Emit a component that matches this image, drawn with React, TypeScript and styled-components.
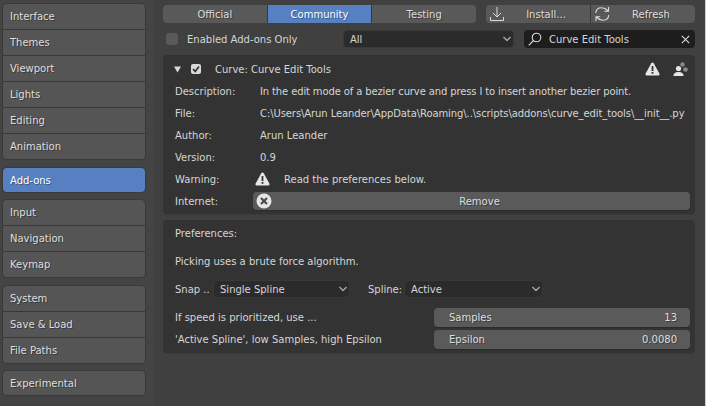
import { FC, ReactNode } from 'react';
import styled, { createGlobalStyle } from 'styled-components';

const GlobalStyle = createGlobalStyle`
  html, body {
    margin: 0;
    padding: 0;
    background: #404040;
  }
  * {
    box-sizing: border-box;
  }
`;

const Page = styled.div`
  width: 706px;
  height: 406px;
  display: flex;
  overflow: hidden;
  background: #404040;
  border-right: 1px solid #d9c9d1;
  color: #d6d6d6;
  font-family: 'DejaVu Sans', sans-serif;
  font-size: 10px;
  line-height: 13px;
  white-space: nowrap;
`;

const Sidebar = styled.aside`
  width: 154px;
  flex: none;
  padding: 4px 9px 0 3px;
  display: flex;
  flex-direction: column;
  background: #444444;
`;

const NavGroup = styled.nav<{ $tight?: boolean }>`
  display: flex;
  flex-direction: column;
  gap: 1px;
  margin-bottom: ${(p) => (p.$tight ? 8 : 9)}px;
  border-radius: 4px;
  overflow: hidden;
  background: #383838;
  box-shadow: 0 0 0 1px #3a3a3a;
`;

const NavItem = styled.div<{ $active?: boolean; $single?: boolean }>`
  height: ${(p) => (p.$single ? 24 : 25)}px;
  padding-left: 7px;
  display: flex;
  align-items: center;
  background: ${(p) => (p.$active ? '#5680c2' : '#555555')};
  color: ${(p) => (p.$active ? '#ffffff' : '#dedede')};
  text-shadow: 1px 1px 0 rgba(0, 0, 0, 0.35);
`;

const Main = styled.main`
  flex: 1;
  min-width: 0;
  padding: 5px 10px 0 9px;
  display: flex;
  flex-direction: column;
`;

const TopRow = styled.div`
  display: flex;
  justify-content: space-between;
  height: 18px;
`;

const ButtonGroup = styled.div<{ $width: number }>`
  width: ${(p) => p.$width}px;
  display: flex;
  gap: 1px;
  border-radius: 4px;
  overflow: hidden;
  background: #383838;
`;

const TabButton = styled.div<{ $active?: boolean; $withIcon?: boolean }>`
  flex: 1;
  position: relative;
  padding-left: ${(p) => (p.$withIcon ? 16 : 0)}px;
  display: flex;
  align-items: center;
  justify-content: center;
  background: ${(p) => (p.$active ? '#5680c2' : '#595959')};
  color: ${(p) => (p.$active ? '#ffffff' : '#dedede')};
  text-shadow: 1px 1px 0 rgba(0, 0, 0, 0.35);
`;

const TabIcon = styled.svg`
  position: absolute;
  left: 4px;
  top: 1px;
`;

const FilterRow = styled.div`
  display: flex;
  align-items: center;
  height: 18px;
  margin-top: 7px;
`;

const Checkbox = styled.div`
  width: 12px;
  height: 12px;
  margin-left: 3px;
  border-radius: 3px;
  background: #5a5a5a;
`;

const FilterLabel = styled.span`
  margin-left: 9px;
  width: 156px;
`;

const Select = styled.div<{ $width: number }>`
  width: ${(p) => p.$width}px;
  height: 18px;
  padding: 0 1px 0 6px;
  display: flex;
  align-items: center;
  justify-content: space-between;
  border-radius: 4px;
  background: #2b2b2b;
  border: 1px solid #383838;
`;

const SearchBox = styled.div`
  width: 171px;
  height: 18px;
  margin-left: 10px;
  padding: 0 5px 0 4px;
  display: flex;
  align-items: center;
  border-radius: 4px;
  background: #1d1d1d;
`;

const SearchText = styled.span`
  flex: 1;
  margin-left: 7px;
`;

const Panel = styled.section`
  border-radius: 4px;
  background: #333333;
  box-shadow: 0 1px 0 #3a3a3a;
`;

const AddonPanel = styled(Panel)`
  margin-top: 7px;
  height: 159px;
  padding: 3px 5px 0 12px;
`;

const PrefsPanel = styled(Panel)`
  margin-top: 6px;
  height: 133px;
  padding: 7px 5px 0 12px;
`;

const Header = styled.div`
  height: 22px;
  display: flex;
  align-items: center;
`;

const DisclosureIcon = styled.svg`
  margin-left: -1px;
`;

const HeaderIcons = styled.div`
  margin-left: auto;
  padding-right: 2px;
  display: flex;
  align-items: center;
  gap: 13px;
`;

const SmallCheck = styled.div`
  width: 10px;
  height: 10px;
  margin-left: 10px;
  border-radius: 2px;
  background: #d9d9d9;
  display: flex;
  align-items: center;
  justify-content: center;
`;

const HeaderTitle = styled.span`
  margin-left: 14px;
`;

const InfoRow = styled.div`
  display: grid;
  grid-template-columns: 85px 1fr;
  align-items: center;
  height: 22px;
`;

const LongValue = styled.span<{ $tracking: number }>`
  letter-spacing: ${(p) => p.$tracking}px;
`;

const WarningValue = styled.div`
  margin-left: -5px;
  display: flex;
  align-items: center;
  gap: 14px;
`;

const RemoveButton = styled.div`
  position: relative;
  margin-left: -7px;
  height: 18px;
  padding-left: 16px;
  display: flex;
  align-items: center;
  justify-content: center;
  border-radius: 4px;
  background: #5a5a5a;
  color: #dedede;
  text-shadow: 1px 1px 0 rgba(0, 0, 0, 0.35);
  box-shadow: 0 1px 0 #2a2a2a;
`;

const RemoveIcon = styled.svg`
  position: absolute;
  left: 3px;
  top: 1px;
`;

const PrefLine = styled.div<{ $gap: number }>`
  margin-top: ${(p) => p.$gap}px;
  height: 13px;
`;

const SnapRow = styled.div`
  margin-top: 11px;
  height: 20px;
  display: flex;
  align-items: center;
`;

const SnapLabel = styled.span`
  width: 38px;
`;

const SplineLabel = styled.span`
  margin-left: 18px;
  width: 36px;
`;

const SettingsBlock = styled.div`
  margin-top: 7px;
`;

const SettingRow = styled.div`
  display: grid;
  grid-template-columns: 259px 1fr;
  align-items: center;
  height: 22px;
`;

const NumberField = styled.div`
  height: 19px;
  margin-top: 1px;
  padding: 0 13px 0 15px;
  display: flex;
  align-items: center;
  justify-content: space-between;
  border-radius: 4px;
  background: #5a5a5a;
  color: #dedede;
  text-shadow: 1px 1px 0 rgba(0, 0, 0, 0.35);
  box-shadow: 0 1px 0 #2a2a2a;
`;

const Chevron: FC = () => (
  <svg width="10" height="8" viewBox="0 0 10 8" fill="none">
    <path d="M1.5 2 L5 5.5 L8.5 2" stroke="#a8a8a8" strokeWidth="1.4" />
  </svg>
);

const WarningIcon: FC = () => (
  <svg width="15" height="14" viewBox="0 0 15 14">
    <path
      d="M7.5 0.5 C8 0.5 8.4 0.8 8.7 1.3 L14.4 11.6 C14.9 12.6 14.4 13.5 13.3 13.5 L1.7 13.5 C0.6 13.5 0.1 12.6 0.6 11.6 L6.3 1.3 C6.6 0.8 7 0.5 7.5 0.5 Z"
      fill="#e6e6e6"
    />
    <rect x="6.6" y="4" width="1.8" height="5" fill="#333333" />
    <rect x="6.6" y="10" width="1.8" height="1.8" fill="#333333" />
  </svg>
);

interface IRowProps {
  label: string;
  children: ReactNode;
}

const Row: FC<IRowProps> = ({ label, children }) => (
  <InfoRow>
    <span>{label}</span>
    {children}
  </InfoRow>
);

const App: FC = () => (
  <Page>
    <GlobalStyle />
    <Sidebar>
      <NavGroup>
        {['Interface', 'Themes', 'Viewport', 'Lights', 'Editing', 'Animation'].map((n) => (
          <NavItem key={n}>{n}</NavItem>
        ))}
      </NavGroup>
      <NavGroup $tight>
        <NavItem $active $single>
          Add-ons
        </NavItem>
      </NavGroup>
      <NavGroup>
        {['Input', 'Navigation', 'Keymap'].map((n) => (
          <NavItem key={n}>{n}</NavItem>
        ))}
      </NavGroup>
      <NavGroup $tight>
        {['System', 'Save & Load', 'File Paths'].map((n) => (
          <NavItem key={n}>{n}</NavItem>
        ))}
      </NavGroup>
      <NavGroup $tight>
        <NavItem $single>Experimental</NavItem>
      </NavGroup>
    </Sidebar>
    <Main>
      <TopRow>
        <ButtonGroup $width={313}>
          <TabButton>Official</TabButton>
          <TabButton $active>Community</TabButton>
          <TabButton>Testing</TabButton>
        </ButtonGroup>
        <ButtonGroup $width={209}>
          <TabButton $withIcon>
            <TabIcon width="15" height="16" viewBox="0 0 15 16" fill="none" stroke="#dcdcdc" strokeWidth="1">
              <path d="M7 1 V11 M3 7 L7 11 L11 7 M0.5 11 V14.5 H13.5 V11" />
            </TabIcon>
            Install...
          </TabButton>
          <TabButton $withIcon>
            <TabIcon width="15" height="16" viewBox="0 0 15 16" fill="none" stroke="#dcdcdc" strokeWidth="1.1">
              <path d="M0.8 7 C1 3.5 3.5 1.8 6.5 1.8 C9 1.8 11 2.8 13.2 5 M13.5 1 V5.3 H9.3" />
              <path d="M13.7 9 C13.5 12.5 11 14.2 8 14.2 C5.5 14.2 3.5 13.2 1.3 11 M1 15 V10.7 H5.2" />
            </TabIcon>
            Refresh
          </TabButton>
        </ButtonGroup>
      </TopRow>
      <FilterRow>
        <Checkbox />
        <FilterLabel>Enabled Add-ons Only</FilterLabel>
        <Select $width={171}>
          All
          <Chevron />
        </Select>
        <SearchBox>
          <svg width="14" height="14" viewBox="0 0 14 14" fill="none" stroke="#d9d9d9" strokeWidth="1.1">
            <circle cx="8.5" cy="5.5" r="4.3" />
            <path d="M5.5 8.5 L0.7 13.3" />
          </svg>
          <SearchText>Curve Edit Tools</SearchText>
          <svg width="9" height="9" viewBox="0 0 9 9" fill="none" stroke="#d9d9d9" strokeWidth="1.1">
            <path d="M0.8 0.8 L8.2 8.2 M8.2 0.8 L0.8 8.2" />
          </svg>
        </SearchBox>
      </FilterRow>
      <AddonPanel>
        <Header>
          <DisclosureIcon width="7" height="7" viewBox="0 0 7 7">
            <path d="M0 0.5 H7 L3.5 6.5 Z" fill="#d9d9d9" />
          </DisclosureIcon>
          <SmallCheck>
            <svg width="8" height="8" viewBox="0 0 8 8" fill="none">
              <path d="M1 4 L3.2 6.4 L7 1.5" stroke="#2e2e2e" strokeWidth="1.6" />
            </svg>
          </SmallCheck>
          <HeaderTitle>Curve: Curve Edit Tools</HeaderTitle>
          <HeaderIcons>
            <WarningIcon />
            <svg width="15" height="14" viewBox="0 0 15 14">
              <circle cx="5.5" cy="6.5" r="2.6" fill="#e6e6e6" />
              <path d="M0.5 14 C0.5 11 2.5 10 5.5 10 C8.5 10 10.5 11 10.5 14 Z" fill="#e6e6e6" />
              <circle cx="9.5" cy="2.5" r="2.2" fill="#8a8a8a" />
              <circle cx="12.5" cy="7.5" r="2.3" fill="#8a8a8a" />
            </svg>
          </HeaderIcons>
        </Header>
        <Row label="Description:">
          <LongValue $tracking={-0.13}>
            In the edit mode of a bezier curve and press I to insert another bezier point.
          </LongValue>
        </Row>
        <Row label="File:">
          <LongValue $tracking={-0.09}>
            C:\Users\Arun Leander\AppData\Roaming\..\scripts\addons\curve_edit_tools\__init__.py
          </LongValue>
        </Row>
        <Row label="Author:">
          <span>Arun Leander</span>
        </Row>
        <Row label="Version:">
          <span>0.9</span>
        </Row>
        <Row label="Warning:">
          <WarningValue>
            <WarningIcon />
            <span>Read the preferences below.</span>
          </WarningValue>
        </Row>
        <Row label="Internet:">
          <RemoveButton>
            <RemoveIcon width="16" height="16" viewBox="0 0 16 16">
              <circle cx="8" cy="8" r="7.5" fill="#e6e6e6" />
              <path d="M5 5 L11 11 M11 5 L5 11" stroke="#4a4a4a" strokeWidth="2.2" />
            </RemoveIcon>
            Remove
          </RemoveButton>
        </Row>
      </AddonPanel>
      <PrefsPanel>
        <PrefLine $gap={0}>Preferences:</PrefLine>
        <PrefLine $gap={15}>Picking uses a brute force algorithm.</PrefLine>
        <SnapRow>
          <SnapLabel>Snap ..</SnapLabel>
          <Select $width={137}>
            Single Spline
            <Chevron />
          </Select>
          <SplineLabel>Spline:</SplineLabel>
          <Select $width={139}>
            Active
            <Chevron />
          </Select>
        </SnapRow>
        <SettingsBlock>
          <SettingRow>
            <span>If speed is prioritized, use ...</span>
            <NumberField>
              <span>Samples</span>
              <span>13</span>
            </NumberField>
          </SettingRow>
          <SettingRow>
            <span>'Active Spline', low Samples, high Epsilon</span>
            <NumberField>
              <span>Epsilon</span>
              <span>0.0080</span>
            </NumberField>
          </SettingRow>
        </SettingsBlock>
      </PrefsPanel>
    </Main>
  </Page>
);

export default App;
